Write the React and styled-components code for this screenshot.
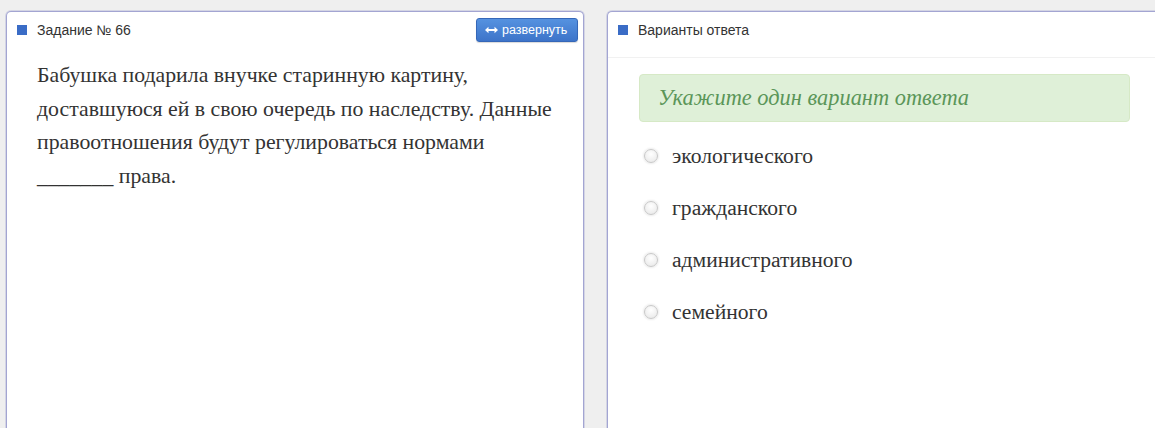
import styled, { createGlobalStyle } from "styled-components";

const GlobalStyle = createGlobalStyle`
  html, body {
    margin: 0;
    padding: 0;
    background: #efefef;
    overflow: hidden;
  }
  body {
    font-family: "Liberation Sans", Arial, sans-serif;
  }
`;

const Page = styled.div`
  display: grid;
  grid-template-columns: 578px 560px;
  column-gap: 23px;
  padding: 11px 0 0 6px;
  height: 428px;
  box-sizing: border-box;
  overflow: hidden;
`;

const Panel = styled.section`
  background: #fff;
  border: 1px solid #a3a5d2;
  border-bottom: 0;
  border-radius: 5px 5px 0 0;
  box-shadow: 0 0 0 1px rgba(163, 165, 210, 0.35);
  height: 440px;
  ${({ $open }) => $open && `border-right: 0; border-top-right-radius: 0;`}
`;

const PanelHead = styled.header`
  display: flex;
  align-items: flex-start;
  justify-content: space-between;
  height: 46px;
  box-sizing: border-box;
  padding: 6px 5px 0 10px;
  border-bottom: 1px solid ${({ $line }) => ($line ? "#f1f1f1" : "transparent")};
`;

const HeadTitle = styled.div`
  display: flex;
  align-items: center;
  gap: 10px;
  height: 24px;
  font-size: 14px;
  color: #333;
`;

const Square = styled.span`
  width: 10px;
  height: 10px;
  background: #3a6cc6;
`;

const ExpandButton = styled.button`
  display: flex;
  align-items: center;
  gap: 4px;
  height: 24px;
  width: 102px;
  padding: 0 0 0 8px;
  border: 1px solid #3567b8;
  border-radius: 3px;
  background: linear-gradient(#5592e0, #3d74c9);
  color: #fff;
  font-family: "Liberation Sans", Arial, sans-serif;
  font-size: 12.5px;
  box-shadow: 0 1px 1px rgba(0, 0, 0, 0.15);
`;

const Question = styled.p`
  margin: 1px 20px 0 30px;
  font-family: "Liberation Serif", "Times New Roman", serif;
  font-size: 21.8px;
  line-height: 33.7px;
  color: #333;
`;

const Answers = styled.div`
  padding: 16px 37px 0 31px;
  font-family: "Liberation Serif", "Times New Roman", serif;
`;

const Hint = styled.div`
  background: #dff0d8;
  border: 1px solid #d6e9c6;
  border-radius: 4px;
  height: 48px;
  box-sizing: border-box;
  display: flex;
  align-items: center;
  padding-left: 18px;
  font-style: italic;
  font-size: 22.4px;
  color: #5b9659;
  margin-bottom: 19px;
`;

const Options = styled.div`
  display: flex;
  flex-direction: column;
  gap: 22px;
  padding-left: 5px;
`;

const Option = styled.label`
  display: flex;
  align-items: center;
  gap: 14px;
  height: 30px;
  font-size: 21.6px;
  color: #333;
`;

const Radio = styled.span`
  width: 12px;
  height: 12px;
  border-radius: 50%;
  border: 1px solid #c8c8c8;
  background: radial-gradient(circle at 50% 35%, #ffffff, #e6e6e6);
  box-shadow: 0 0 2px 1px rgba(0, 0, 0, 0.08);
`;

const ArrowIcon = () => (
  <svg width="13" height="8" viewBox="0 0 13 8">
    <path d="M0 4 L3.5 0.8 V3 H9.5 V0.8 L13 4 L9.5 7.2 V5 H3.5 V7.2 Z" fill="#fff" />
  </svg>
);

const options = ["экологического", "гражданского", "административного", "семейного"];

export default function App() {
  return (
    <>
      <GlobalStyle />
      <Page>
        <Panel>
          <PanelHead>
            <HeadTitle>
              <Square />
              Задание № 66
            </HeadTitle>
            <ExpandButton>
              <ArrowIcon />
              развернуть
            </ExpandButton>
          </PanelHead>
          <Question>
            Бабушка подарила внучке старинную картину, доставшуюся ей в свою очередь по
            наследству. Данные правоотношения будут регулироваться нормами _______ права.
          </Question>
        </Panel>
        <Panel $open>
          <PanelHead $line>
            <HeadTitle>
              <Square />
              Варианты ответа
            </HeadTitle>
          </PanelHead>
          <Answers>
            <Hint>Укажите один вариант ответа</Hint>
            <Options>
              {options.map((o) => (
                <Option key={o}>
                  <Radio />
                  {o}
                </Option>
              ))}
            </Options>
          </Answers>
        </Panel>
      </Page>
    </>
  );
}
